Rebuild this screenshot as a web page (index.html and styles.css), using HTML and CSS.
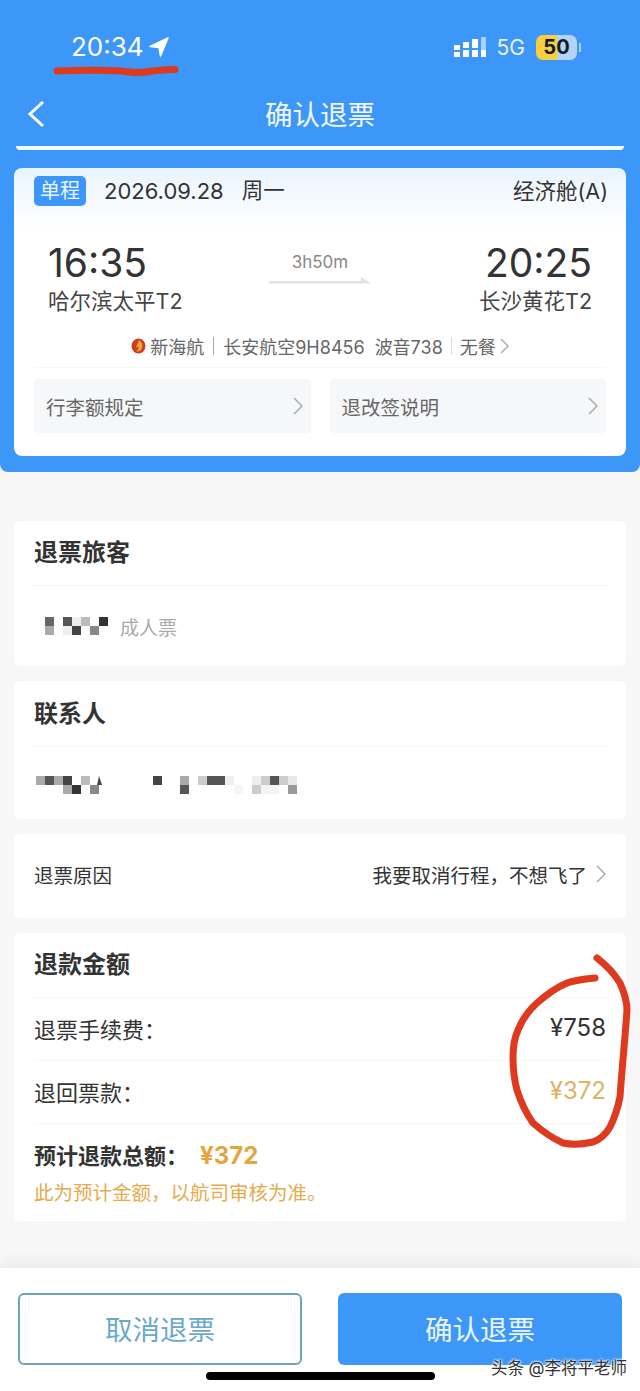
FILE: index.html
```html
<!DOCTYPE html>
<html lang="zh-CN">
<head>
    <meta charset="UTF-8">
    <meta name="viewport" content="width=device-width, initial-scale=1.0">
    <title>确认退票</title>
    <link rel="stylesheet" href="styles.css">
</head>
<body>
    <div class="page">
        <div class="top">
            <div class="status">
                <div class="clock">20:34
                    <svg class="loc" width="22" height="22" viewBox="0 0 22 22"><path d="M20 2 2 10.500l9 1 1.500 8.500z" fill="#fff" stroke="#fff" stroke-width="1.500" stroke-linejoin="round"/></svg>
                </div>
                <div class="status-right">
                    <svg width="33" height="22" viewBox="0 0 33 22">
                        <g fill="#fff">
                            <rect x="0" y="9" width="6" height="5"/><rect x="0" y="16" width="6" height="5"/>
                            <rect x="9" y="6" width="6" height="6"/><rect x="9" y="14" width="6" height="7"/>
                            <rect x="18" y="3" width="6" height="9"/><rect x="18" y="14" width="6" height="7"/>
                        </g>
                        <rect x="27" y="1" width="5" height="20" fill="#a9cff7"/>
                        <rect x="27" y="14" width="5" height="7" fill="#fff"/>
                    </svg>
                    <span class="net">5G</span>
                    <div class="batt"><span>50</span></div>
                    <div class="batt-cap"></div>
                </div>
            </div>
            <div class="nav">
                <svg class="back" width="20" height="30" viewBox="0 0 20 30"><path d="M17 3 4 15l13 12" fill="none" stroke="#fff" stroke-width="3"/></svg>
                <h1 class="nav-title">确认退票</h1>
            </div>
            <div class="nav-line"></div>

            <div class="flight">
                <div class="flight-head">
                    <span class="pill">单程</span>
                    <span class="date">2026.09.28</span>
                    <span class="week">周一</span>
                    <span class="cabin">经济舱(A)</span>
                </div>
                <div class="route">
                    <div class="point">
                        <div class="time">16:35</div>
                        <div class="airport">哈尔滨太平T2</div>
                    </div>
                    <div class="duration">
                        <span>3h50m</span>
                        <svg width="102" height="10" viewBox="0 0 102 10"><path d="M0 9.500h102L92 3v4H0z" fill="#dfe2e6"/></svg>
                    </div>
                    <div class="point point-end">
                        <div class="time">20:25</div>
                        <div class="airport">长沙黄花T2</div>
                    </div>
                </div>
                <div class="info">
                    <svg width="15" height="17" viewBox="0 0 15 17"><ellipse cx="7.500" cy="9" rx="7" ry="7.500" fill="#c8401c"/><path d="M8 3c3 2 4 5 3 8-1 3-4 4-6 3 3-1 3-3 2-5-1 1-1 2-2 2 0-3 3-5 3-8z" fill="#f3a53a"/></svg>
                    <span>新海航</span>
                    <i class="bar"></i>
                    <span>长安航空9H8456</span>
                    <span class="plane">波音738</span>
                    <i class="bar bar-light"></i>
                    <span>无餐</span>
                    <svg class="chev" width="9" height="16" viewBox="0 0 9 16"><path d="M1 1l7 7-7 7" fill="none" stroke="#aaa" stroke-width="1.400"/></svg>
                </div>
                <div class="links">
                    <div class="link">行李额规定
                        <svg width="10" height="18" viewBox="0 0 10 18"><path d="M1 1l8 8-8 8" fill="none" stroke="#aaa" stroke-width="1.500"/></svg>
                    </div>
                    <div class="link">退改签说明
                        <svg width="10" height="18" viewBox="0 0 10 18"><path d="M1 1l8 8-8 8" fill="none" stroke="#aaa" stroke-width="1.500"/></svg>
                    </div>
                </div>
            </div>
        </div>

        <div class="content">
            <section class="box box-passenger">
                <h2 class="box-title">退票旅客</h2>
                <div class="box-row">
                    <svg width="63" height="18" viewBox="0 0 63 18">
                        <rect x="0" y="0" width="9" height="9" fill="#666"/><rect x="18" y="0" width="9" height="9" fill="#555"/><rect x="27" y="0" width="9" height="9" fill="#eee"/><rect x="36" y="0" width="9" height="9" fill="#bbb"/><rect x="54" y="0" width="9" height="9" fill="#333"/>
                        <rect x="0" y="9" width="9" height="9" fill="#aaa"/><rect x="18" y="9" width="9" height="9" fill="#eee"/><rect x="27" y="9" width="9" height="9" fill="#444"/><rect x="45" y="9" width="9" height="9" fill="#888"/>
                    </svg>
                    <span class="ticket-type">成人票</span>
                </div>
            </section>
            <section class="box box-contact">
                <h2 class="box-title">联系人</h2>
                <div class="box-row box-row-contact">
                    <svg width="262" height="18" viewBox="0 0 262 18">
                        <rect x="0" y="0" width="9" height="9" fill="#aaa"/><rect x="9" y="0" width="9" height="9" fill="#555"/><rect x="18" y="0" width="9" height="9" fill="#aaa"/><rect x="27" y="0" width="9" height="9" fill="#444"/><rect x="45" y="0" width="9" height="9" fill="#bbb"/>
                        <rect x="27" y="9" width="9" height="9" fill="#aaa"/><rect x="36" y="9" width="9" height="9" fill="#333"/><rect x="54" y="9" width="9" height="9" fill="#888"/>
                        <path d="M63 0l1 3 2 6h-5z" fill="#444"/>
                        <rect x="117" y="0" width="9" height="9" fill="#444"/><rect x="144" y="0" width="9" height="9" fill="#aaa"/><rect x="144" y="9" width="9" height="9" fill="#555"/>
                        <rect x="162" y="0" width="9" height="9" fill="#ccc"/><rect x="171" y="0" width="18" height="9" fill="#555"/><rect x="189" y="0" width="9" height="9" fill="#eee"/><rect x="198" y="9" width="9" height="9" fill="#f6f6f6"/>
                        <rect x="216" y="0" width="9" height="9" fill="#eee"/><rect x="225" y="0" width="9" height="9" fill="#ccc"/><rect x="234" y="0" width="9" height="9" fill="#555"/><rect x="243" y="0" width="9" height="9" fill="#ccc"/><rect x="252" y="0" width="9" height="9" fill="#e8e8e8"/>
                        <rect x="216" y="9" width="9" height="9" fill="#ccc"/><rect x="225" y="9" width="18" height="9" fill="#f3f3f3"/><rect x="252" y="9" width="9" height="9" fill="#999"/>
                    </svg>
                </div>
            </section>
            <section class="box box-reason">
                <span>退票原因</span>
                <span class="reason-val">我要取消行程，不想飞了
                    <svg width="10" height="18" viewBox="0 0 10 18"><path d="M1 1l8 8-8 8" fill="none" stroke="#aaa" stroke-width="1.500"/></svg>
                </span>
            </section>
            <section class="box box-refund">
                <h2 class="box-title">退款金额</h2>
                <div class="fee-row"><span>退票手续费：</span><span class="amount">¥758</span></div>
                <div class="fee-row"><span>退回票款：</span><span class="amount amount-orange">¥372</span></div>
                <div class="total"><span>预计退款总额：</span><span class="total-num">¥372</span></div>
                <div class="note">此为预计金额，以航司审核为准。</div>
            </section>
        </div>

        <div class="bottom">
            <button type="button" class="btn btn-line">取消退票</button>
            <button type="button" class="btn btn-fill">确认退票</button>
        </div>
        <div class="home-bar"></div>
        <div class="watermark">头条 @李将平老师</div>

        <svg class="marks" width="640" height="1391" viewBox="0 0 640 1391">
            <path d="M57 71c25-1 45-1 65 0 14 2 20 2 30 0 8-1 16-2 23-1.500" />
            <path d="M595 978c-10 1-20 2-28 5-12 5-21 12-30 20-9 8-15 17-19 27-4 9-5 18-5 27 0 12 1 22 4 33 4 13 9 23 16 33 9 8 19 15 30 20 10 2 21 1 30-1 8-3 13-8 17-15 5-10 8-20 10-30 2-29 5-58 7-87 0-9-3-18-7-27-6-10-14-18-23-25" />
        </svg>
    </div>
</body>
</html>
```

FILE: styles.css
```css
* {
    box-sizing: border-box;
}
body {
    margin: 0;
    font-family: Inter, "Noto Sans CJK SC", sans-serif;
    color: #333;
    background-color: #f7f7f7;
}
.page {
    position: relative;
    width: 640px;
    height: 1391px;
    overflow: hidden;
    display: flex;
    flex-direction: column;
}
.top {
    height: 472px;
    padding: 0 14px;
    background-color: #3d97f8;
    border-radius: 0 0 8px 8px;
}
.status {
    height: 84px;
    padding: 29px 45px 0 57px;
    display: flex;
    justify-content: space-between;
    align-items: flex-start;
    color: #fff;
}
.clock {
    font-size: 26px;
    line-height: 36px;
    display: flex;
    align-items: center;
    gap: 4px;
}
.status-right {
    display: flex;
    align-items: center;
    height: 36px;
}
.net {
    margin: 0 11px 0 10px;
    font-size: 21px;
    color: #e8f3fe;
}
.batt {
    width: 41px;
    height: 25px;
    border-radius: 7px;
    background: linear-gradient(90deg, #f5cf3e 0 50%, #b5d3f5 50% 100%);
    color: #141a2a;
    font-size: 20px;
    font-weight: 700;
    text-align: center;
    line-height: 25px;
}
.batt-cap {
    width: 2px;
    height: 9px;
    margin-left: 2px;
    background-color: #a9cff7;
}
.nav {
    position: relative;
    height: 60px;
    padding-bottom: 2px;
    display: flex;
    align-items: center;
    justify-content: center;
}
.back {
    position: absolute;
    left: 12px;
    top: 15px;
}
.nav-title {
    margin: 0;
    font-size: 27.500px;
    font-weight: 400;
    color: #f1f8ff;
}
.nav-line {
    height: 4px;
    margin: 2px 2px 0;
    background-color: #f0fbff;
    border-radius: 0 0 4px 4px;
}
.flight {
    height: 288px;
    margin-top: 18px;
    background: linear-gradient(180deg, #eaf4fc 0, #fff 60px);
    border-radius: 8px;
    padding: 0 20px;
}
.flight-head {
    height: 46px;
    display: flex;
    align-items: center;
    font-size: 21.500px;
}
.pill {
    width: 52px;
    height: 30px;
    margin-right: 18px;
    background-color: #3d97f8;
    border-radius: 5px;
    color: #eaf6ff;
    font-size: 20px;
    line-height: 30px;
    text-align: center;
}
.date {
    margin-right: 18px;
    font-size: 22px;
}
.week {
    padding-bottom: 5px;
}
.cabin {
    margin-left: auto;
    margin-right: -2px;
    padding-bottom: 4px;
}
.route {
    height: 102px;
    padding: 25px 14px 0;
    display: flex;
    justify-content: space-between;
}
.point {
    flex: 1;
}
.time {
    font-size: 39px;
    line-height: 47px;
}
.airport {
    font-size: 21.500px;
    line-height: 30px;
    color: #444;
}
.point-end {
    text-align: right;
}
.duration {
    width: 102px;
    padding-top: 13px;
    display: flex;
    flex-direction: column;
    align-items: center;
    gap: 2px;
    font-size: 17px;
    color: #888;
}
.info {
    height: 52px;
    padding-top: 8px;
    display: flex;
    align-items: center;
    justify-content: center;
    font-size: 18px;
    color: #666;
    border-bottom: 1px solid #f7f7f7;
    gap: 4px;
}
.bar {
    width: 1px;
    height: 18px;
    margin: 0 5px;
    background-color: #aaa;
}
.bar-light {
    background-color: #ddd;
    margin: 0 4px;
}
.plane {
    margin-left: 6px;
}
.links {
    margin-top: 11px;
    display: flex;
    gap: 19px;
}
.link {
    flex: 1;
    height: 54px;
    padding: 0 8px 0 12px;
    display: flex;
    align-items: center;
    justify-content: space-between;
    background-color: #f6f7f9;
    border-radius: 4px;
    font-size: 19.500px;
    color: #666;
}
.content {
    padding: 49px 14px 0;
    display: flex;
    flex-direction: column;
    gap: 15px;
}
.box {
    background-color: #fff;
    border-radius: 6px;
    padding: 0 20px;
}
.box-passenger {
    height: 145px;
}
.box-contact {
    height: 138px;
}
.box-reason {
    height: 84px;
    padding-bottom: 4px;
    display: flex;
    align-items: center;
    justify-content: space-between;
    font-size: 19.500px;
}
.box-refund {
    height: 288px;
}
.box-title {
    margin: 0;
    height: 65px;
    font-size: 24px;
    font-weight: 700;
    line-height: 64px;
    border-bottom: 1px solid #f5f5f5;
}
.box-row {
    height: 80px;
    display: flex;
    align-items: center;
    gap: 12px;
    padding-left: 11px;
}
.box-contact .box-title {
    height: 66px;
    line-height: 66px;
}
.box-row-contact {
    height: 76px;
    padding-left: 2px;
}
.ticket-type {
    font-size: 19px;
    color: #aaa;
}
.reason-val {
    display: flex;
    align-items: center;
    gap: 9px;
}
.fee-row {
    height: 63px;
    padding-bottom: 3px;
    display: flex;
    align-items: center;
    justify-content: space-between;
    border-bottom: 1px solid #f7f7f7;
    font-size: 22px;
}
.amount {
    font-size: 24px;
}
.amount-orange {
    color: #e0b264;
}
.total {
    margin-top: 14px;
    display: flex;
    align-items: center;
    font-size: 22px;
    font-weight: 700;
    line-height: 36px;
}
.total-num {
    margin-left: 12px;
    font-size: 24px;
    color: #e3a63f;
}
.note {
    margin-top: 4px;
    font-size: 19.500px;
    line-height: 30px;
    color: #e5ab4c;
}
.bottom {
    position: absolute;
    left: 0;
    right: 0;
    bottom: 0;
    height: 123px;
    padding: 25px 18px 0;
    display: flex;
    justify-content: space-between;
    align-items: flex-start;
    background-color: #fff;
    box-shadow: 0 -6px 14px rgba(0, 0, 0, 0.05);
}
.btn {
    width: 284px;
    height: 72px;
    padding: 0 0 2px;
    border-radius: 6px;
    font-family: inherit;
    font-size: 27.500px;
}
.btn-line {
    background-color: #fff;
    border: 2px solid #6ca3c4;
    color: #6ca8cc;
}
.btn-fill {
    background-color: #3d97f8;
    border: none;
    color: #e9f6ff;
}
.home-bar {
    position: absolute;
    left: 206px;
    top: 1372px;
    width: 229px;
    height: 8px;
    background-color: #000;
    border-radius: 4px;
}
.watermark {
    position: absolute;
    right: 13px;
    top: 1355px;
    font-size: 16.500px;
    line-height: 26px;
    color: #333;
    text-shadow: 0 0 2px #fff, 0 0 2px #fff, 0 0 3px #fff;
}
.marks {
    position: absolute;
    left: 0;
    top: 0;
    pointer-events: none;
}
.marks path {
    fill: none;
    stroke: #dd3a20;
    stroke-width: 7;
    stroke-linecap: round;
    stroke-linejoin: round;
}
```
